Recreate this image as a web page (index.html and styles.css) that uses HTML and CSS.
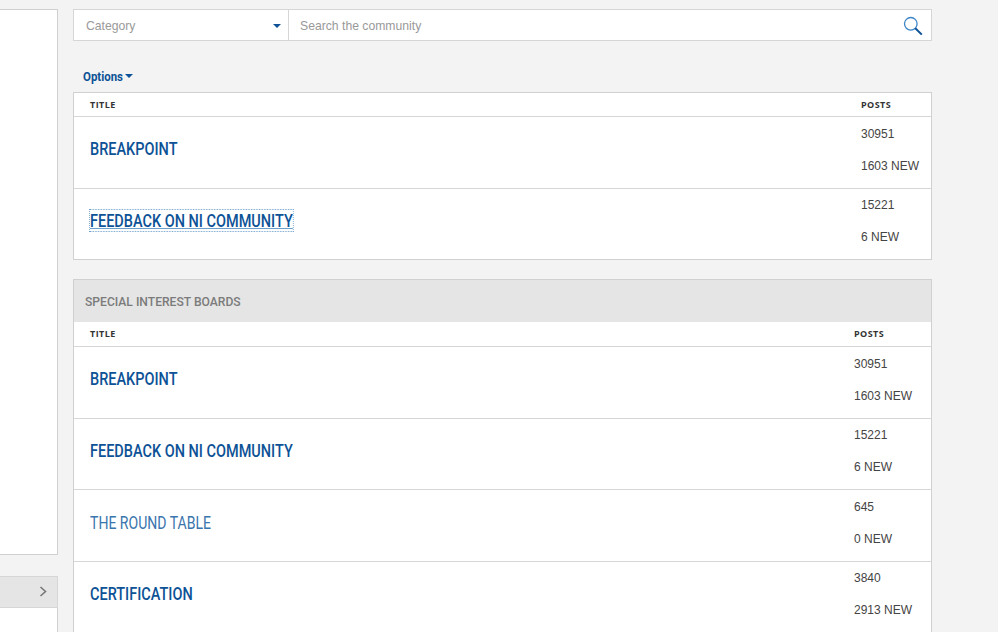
FILE: index.html
```html
<!DOCTYPE html>
<html lang="en">
<head>
<meta charset="utf-8">
<title>Community boards</title>
<link rel="stylesheet" href="styles.css">
</head>
<body>
<div class="page">
  <aside class="side">
    <div class="side-panel"></div>
    <div class="side-bar">
      <svg class="chev" width="8" height="11" viewBox="0 0 8 11"><path d="M1.5 1 L6.5 5.5 L1.5 10" fill="none" stroke="#777" stroke-width="1.6"/></svg>
    </div>
    <div class="side-rest"></div>
  </aside>
  <main class="main">
    <div class="search">
      <div class="cat">
        <span>Category</span>
        <i class="caret"></i>
      </div>
      <div class="query">
        <span>Search the community</span>
        <svg class="mag" width="20" height="20" viewBox="0 0 20 20">
          <circle cx="7.8" cy="7.8" r="6.3" fill="none" stroke="#3d85c6" stroke-width="1.3"/>
          <path d="M12.3 12.3 L18.8 18.6" stroke="#0d5296" stroke-width="2" fill="none"/>
        </svg>
      </div>
    </div>
    <div class="options"><span class="options-label">Options</span><i class="caret"></i></div>
    <section class="board first">
      <div class="row head"><span class="title-col">TITLE</span><span class="posts-col wide">POSTS</span></div>
      <div class="row item"><div class="title-col"><a class="link">BREAKPOINT</a></div><div class="posts-col wide"><p>30951</p><p>1603 NEW</p></div></div>
      <div class="row item"><div class="title-col"><a class="link focus">FEEDBACK ON NI COMMUNITY</a></div><div class="posts-col wide"><p>15221</p><p>6 NEW</p></div></div>
    </section>
    <section class="board">
      <h2 class="band"><span class="band-label">SPECIAL INTEREST BOARDS</span></h2>
      <div class="row head tall"><span class="title-col">TITLE</span><span class="posts-col">POSTS</span></div>
      <div class="row item"><div class="title-col"><a class="link">BREAKPOINT</a></div><div class="posts-col"><p>30951</p><p>1603 NEW</p></div></div>
      <div class="row item"><div class="title-col"><a class="link">FEEDBACK ON NI COMMUNITY</a></div><div class="posts-col"><p>15221</p><p>6 NEW</p></div></div>
      <div class="row item"><div class="title-col"><a class="link read">THE ROUND TABLE</a></div><div class="posts-col"><p>645</p><p>0 NEW</p></div></div>
      <div class="row item"><div class="title-col"><a class="link">CERTIFICATION</a></div><div class="posts-col"><p>3840</p><p>2913 NEW</p></div></div>
    </section>
  </main>
</div>
</body>
</html>
```

FILE: styles.css
```css
* { box-sizing: border-box; }
html, body { margin: 0; height: 632px; overflow: hidden; background: #f3f3f3; }
body { font-family: "Liberation Sans", Arial, sans-serif; color: #444; }
.page { display: flex; gap: 15px; padding-top: 9px; height: 632px; overflow: hidden; }
.side { width: 58px; flex: none; display: flex; flex-direction: column; }
.side-panel { height: 546px; background: #fff; border: 1px solid #d0d0d0; border-left: 0; flex: none; }
.side-bar { margin-top: 21px; height: 32px; flex: none; background: #e5e5e5; border: 1px solid #d6d6d6; border-left: 0; display: flex; align-items: center; justify-content: flex-end; padding: 0 10px 2px 0; }
.side-rest { flex: 1; background: #fff; border-right: 1px solid #d0d0d0; }
.main { width: 859px; flex: none; }
.search { display: flex; height: 32px; background: #fff; border: 1px solid #d6d6d6; font-size: 12.2px; color: #999; }
.cat { width: 215px; flex: none; border-right: 1px solid #d6d6d6; display: flex; align-items: center; justify-content: space-between; padding: 1px 7px 0 12px; }
.query { flex: 1; display: flex; align-items: center; justify-content: space-between; padding: 1px 8px 0 11px; }
.caret { display: inline-block; width: 0; height: 0; border-left: 4px solid transparent; border-right: 4px solid transparent; border-top: 4px solid #0d5296; }
.options { display: flex; align-items: center; gap: 2px; height: 14px; margin: 28px 0 9px 10px; font-family: Roboto, sans-serif; font-size: 13px; font-weight: 700; color: #0d5296; }
.options-label { display: inline-block; width: 40px; transform: scaleX(.88); transform-origin: left center; }
.board { background: #fff; border: 1px solid #d0d0d0; margin-bottom: 19px; }
.band { margin: 0; height: 42px; background: #e5e5e5; font-family: Roboto, sans-serif; font-size: 13.5px; font-weight: 500; color: #7b7b7b; line-height: 43px; padding-left: 11px; }
.band-label { display: inline-block; transform: scaleX(.897); transform-origin: left center; }
.row { display: flex; justify-content: space-between; }
.head { height: 23px; align-items: center; padding-bottom: 1px; font-family: "Open Sans", sans-serif; font-size: 9px; font-weight: 700; color: #333; letter-spacing: .45px; }
.head.tall { height: 24px; padding-bottom: 2px; }
.title-col { padding-left: 16px; }
.posts-col { width: 77px; flex: none; padding-top: .5px; }
.posts-col.wide { width: 70px; }
.item { height: 71.6px; border-top: 1px solid #d6d6d6; align-items: stretch; }
.item .title-col { display: flex; align-items: center; padding-bottom: 7px; }
.item p { margin: 0; font-size: 12px; line-height: 32px; color: #444; }
.link { display: inline-block; font-family: Roboto, sans-serif; font-size: 18px; font-weight: 500; color: #0d5296; transform: scaleX(.805); transform-origin: left center; white-space: nowrap; }
.link.read { font-weight: 400; color: #3a75ad; transform: scaleX(.78); }
.link.focus { outline: 1px dotted #6d9fcc; text-decoration: underline; text-decoration-color: #6d9fcc; }
```
